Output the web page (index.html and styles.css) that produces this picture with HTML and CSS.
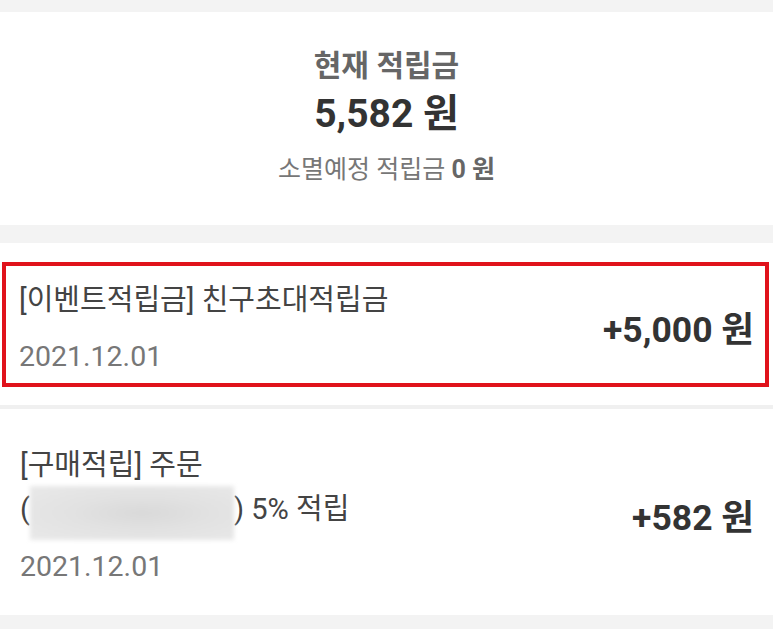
FILE: index.html
```html
<!DOCTYPE html>
<html lang="ko">
<head>
<meta charset="utf-8">
<title>적립금</title>
<link rel="stylesheet" href="styles.css">
</head>
<body>
<div class="page">
  <section class="summary">
    <div class="summary-title">현재 적립금</div>
    <div class="summary-amount">5,582 원</div>
    <div class="summary-sub">소멸예정 적립금 <b>0 원</b></div>
  </section>

  <section class="list">
    <div class="item item-highlight">
      <div class="item-box">
        <div class="item-text">
          <div class="item-title">[이벤트적립금] 친구초대적립금</div>
          <div class="item-date">2021.12.01</div>
        </div>
        <div class="item-amount">+5,000 원</div>
      </div>
    </div>
    <div class="item item-plain">
      <div class="item-box">
        <div class="item-text">
          <div class="item-title">[구매적립] 주문</div>
          <div class="item-title">(<span class="blur"></span>) 5% 적립</div>
          <div class="item-date">2021.12.01</div>
        </div>
        <div class="item-amount">+582 원</div>
      </div>
    </div>
  </section>
</div>
</body>
</html>
```

FILE: styles.css
```css
* { box-sizing: border-box; }
html, body {
  margin: 0;
  padding: 0;
  background: #f3f3f3;
  font-family: Roboto, "Noto Sans CJK KR", sans-serif;
}
.page {
  padding-top: 12px;
}
.summary {
  background: #fff;
  height: 213px;
  padding-top: 34px;
  display: flex;
  flex-direction: column;
  align-items: center;
}
.summary-title {
  font-size: 30px;
  line-height: 40px;
  font-weight: 700;
  color: #666;
}
.summary-amount {
  font-size: 39px;
  line-height: 48px;
  font-weight: 700;
  color: #333;
  margin-top: 4px;
}
.summary-sub {
  font-size: 25px;
  line-height: 36px;
  color: #777;
  margin-top: 14px;
}
.summary-sub b {
  color: #666;
}
.list {
  margin-top: 18px;
  background: #fff;
}
.item-highlight {
  padding: 19px 4px 18px 2px;
  border-bottom: 4px solid #f0f0f0;
}
.item-highlight .item-box {
  border: 4px solid #e0121b;
  padding: 12px 11px 8px 13px;
}
.item-plain {
  padding: 34px 19px 30px 20px;
}
.item-box {
  display: flex;
  align-items: center;
  justify-content: space-between;
}
.item-title {
  font-size: 29px;
  line-height: 44px;
  color: #444;
  white-space: nowrap;
}
.item-date {
  font-size: 28.5px;
  line-height: 36px;
  color: #777;
  margin-top: 17px;
}
.item-amount {
  font-size: 35.5px;
  font-weight: 700;
  color: #333;
  white-space: nowrap;
}
.blur {
  display: inline-block;
  width: 204px;
  height: 54px;
  vertical-align: middle;
  margin: -4px 0 -8px 0;
  background: radial-gradient(ellipse at 55% 50%, #d9d9d9 0%, #e2e2e2 45%, #e9e9e9 100%);
  filter: blur(2px);
}
```
